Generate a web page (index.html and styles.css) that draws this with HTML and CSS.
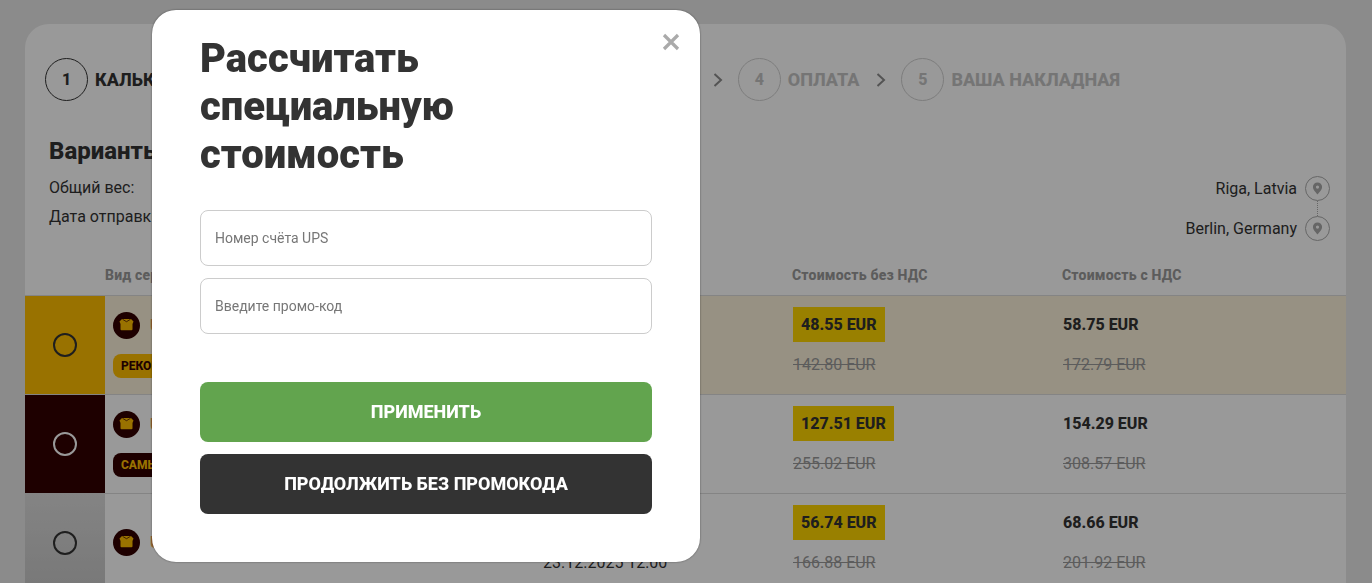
FILE: index.html
```html
<!DOCTYPE html>
<html lang="ru">
<head>
    <meta charset="UTF-8">
    <meta name="viewport" content="width=device-width, initial-scale=1.0">
    <title>Рассчитать специальную стоимость</title>
    <link rel="stylesheet" href="styles.css">
</head>
<body>
    <svg class="icon-defs" width="0" height="0" aria-hidden="true">
        <symbol id="box" viewBox="0 0 27 27">
            <circle cx="13.5" cy="13.5" r="13.5" fill="#320000"/>
            <path d="M6.5 9.5L9 7h9l2.5 2.5L19.5 12h-12z" fill="#ffbf00"/>
            <path d="M7.5 12h4l2-2.5 2 2.5h4v5.2a1 1 0 0 1-1 1h-10a1 1 0 0 1-1-1z" fill="#ffbf00"/>
            <path d="M9.5 7.3l4 2.4 4-2.4" fill="none" stroke="#320000" stroke-width=".7"/>
        </symbol>
        <symbol id="pin" viewBox="0 0 25 25">
            <circle cx="12.5" cy="12.5" r="12" fill="none" stroke="#aaa" stroke-width="1"/>
            <path d="M12.5 6.5a4.6 4.6 0 0 0-4.6 4.6c0 3 4.6 7.4 4.6 7.4s4.6-4.4 4.6-7.4a4.6 4.6 0 0 0-4.6-4.6zm0 6.2a1.6 1.6 0 1 1 0-3.2 1.6 1.6 0 0 1 0 3.2z" fill="#aaa"/>
        </symbol>
        <symbol id="chevron" viewBox="0 0 10 14">
            <path d="M1.5 1L8 7l-6.5 6" fill="none" stroke="currentColor" stroke-width="2"/>
        </symbol>
    </svg>

    <div class="card">
        <div class="steps">
            <div class="step active"><span class="step-num">1</span><span class="step-name">КАЛЬКУЛЯТОР</span></div>
            <div class="steps-rest">
                <svg class="chevron"><use href="#chevron"/></svg>
                <div class="step"><span class="step-num">4</span><span class="step-name">ОПЛАТА</span></div>
                <svg class="chevron"><use href="#chevron"/></svg>
                <div class="step"><span class="step-num">5</span><span class="step-name">ВАША НАКЛАДНАЯ</span></div>
            </div>
        </div>

        <div class="summary">
            <div class="summary-left">
                <h2>Варианты доставки</h2>
                <p>Общий вес:</p>
                <p>Дата отправки</p>
            </div>
            <div class="route">
                <div class="route-item">Riga, Latvia <svg class="pin"><use href="#pin"/></svg></div>
                <div class="route-item">Berlin, Germany <svg class="pin"><use href="#pin"/></svg></div>
            </div>
        </div>

        <div class="table-head">
            <div>Вид сервиса</div>
            <div></div>
            <div>Стоимость без НДС</div>
            <div>Стоимость с НДС</div>
        </div>

        <div class="row row-best">
            <div class="pick pick-best"><span class="radio"></span></div>
            <div class="service">
                <div class="service-name"><svg class="box"><use href="#box"/></svg><span>UPS</span></div>
                <span class="tag tag-best">РЕКОМЕНДУЕМ</span>
            </div>
            <div class="date"></div>
            <div class="price"><span class="price-new">48.55 EUR</span><span class="price-old">142.80 EUR</span></div>
            <div class="price"><span class="price-new plain">58.75 EUR</span><span class="price-old">172.79 EUR</span></div>
        </div>

        <div class="row">
            <div class="pick pick-fast"><span class="radio light"></span></div>
            <div class="service">
                <div class="service-name"><svg class="box"><use href="#box"/></svg><span>UPS</span></div>
                <span class="tag tag-fast">САМЫЙ БЫСТРЫЙ</span>
            </div>
            <div class="date"></div>
            <div class="price"><span class="price-new">127.51 EUR</span><span class="price-old">255.02 EUR</span></div>
            <div class="price"><span class="price-new plain">154.29 EUR</span><span class="price-old">308.57 EUR</span></div>
        </div>

        <div class="row">
            <div class="pick pick-plain"><span class="radio"></span></div>
            <div class="service">
                <div class="service-name"><svg class="box"><use href="#box"/></svg><span>UPS</span></div>
            </div>
            <div class="date">23.12.2025 12:00</div>
            <div class="price"><span class="price-new">56.74 EUR</span><span class="price-old">166.88 EUR</span></div>
            <div class="price"><span class="price-new plain">68.66 EUR</span><span class="price-old">201.92 EUR</span></div>
        </div>
    </div>

    <div class="overlay">
        <div class="modal">
            <button class="modal-close" type="button" aria-label="Закрыть">
                <svg width="18" height="18" viewBox="0 0 18 18"><path d="M2 2l14 14M16 2L2 16" stroke="#aaa" stroke-width="3.2" fill="none"/></svg>
            </button>
            <h1>Рассчитать специальную стоимость</h1>
            <form class="modal-form">
                <input type="text" placeholder="Номер счёта UPS">
                <input type="text" placeholder="Введите промо-код">
                <button class="btn btn-green" type="button">ПРИМЕНИТЬ</button>
                <button class="btn btn-dark" type="button">ПРОДОЛЖИТЬ БЕЗ ПРОМОКОДА</button>
            </form>
        </div>
    </div>
</body>
</html>
```

FILE: styles.css
```css
* {
    box-sizing: border-box;
}
html, body {
    height: 100%;
}
body {
    margin: 0;
    padding: 24px 26px 0 25px;
    overflow: hidden;
    font-family: Roboto, "Liberation Sans", sans-serif;
    background-color: #e8e8e8;
    color: #333;
}
.icon-defs {
    position: absolute;
}

.card {
    background: #fff;
    border-radius: 24px 24px 0 0;
    height: 559px;
    overflow: hidden;
}

/* steps */
.steps {
    display: flex;
    align-items: center;
    justify-content: space-between;
    padding: 34px 226px 0 20px;
    height: 77px;
}
.steps-rest {
    display: flex;
    align-items: center;
}
.step {
    display: flex;
    align-items: center;
    gap: 7px;
    color: #c4c4c4;
    font-size: 18px;
    font-weight: 800;
}
.step-num {
    display: flex;
    align-items: center;
    justify-content: center;
    width: 43px;
    height: 43px;
    border: 1px solid #d0d0d0;
    border-radius: 50%;
    font-size: 16px;
}
.step.active {
    color: #333;
}
.step.active .step-num {
    border-color: #333;
}
.chevron {
    width: 10px;
    height: 14px;
    margin: 0 15px 0 17px;
    color: #8c8c8c;
}

/* summary */
.summary {
    display: flex;
    justify-content: space-between;
    padding: 36px 16px 0 24px;
    height: 155px;
}
.summary-left h2 {
    margin: 0 0 13px;
    font-size: 24px;
    line-height: 28px;
    font-weight: 800;
}
.summary-left p {
    margin: 0 0 10px;
    font-size: 16px;
    line-height: 19px;
}
.route {
    padding-top: 39px;
}
.route-item {
    display: flex;
    align-items: center;
    justify-content: flex-end;
    gap: 8px;
    height: 25px;
    margin-bottom: 15px;
    font-size: 16px;
    position: relative;
}
.route-item:first-child::after {
    content: "";
    position: absolute;
    right: 12px;
    top: 25px;
    height: 15px;
    border-left: 1px dotted #aaa;
}
.pin {
    width: 25px;
    height: 25px;
}

/* table */
.table-head,
.row {
    display: grid;
    grid-template-columns: 80px 438px 249px 270px 1fr;
}
.table-head {
    grid-template-columns: 518px 249px 270px 1fr;
    padding-top: 11px;
    height: 40px;
    border-bottom: 1px solid #ddd;
    color: #999;
    font-size: 14px;
    font-weight: 800;
    letter-spacing: .2px;
}
.table-head > div:first-child {
    padding-left: 80px;
}
.row {
    height: 99px;
    border-bottom: 1px solid #ddd;
}
.row-best {
    background-color: #fcf2da;
}
.pick {
    display: flex;
    align-items: center;
    justify-content: center;
}
.pick-best {
    background-color: #ffbf00;
}
.pick-fast {
    background-color: #320000;
}
.pick-plain {
    background: linear-gradient(#dcdcdc, #c8c8c8);
}
.radio {
    width: 24px;
    height: 24px;
    border: 2px solid #333;
    border-radius: 50%;
}
.radio.light {
    border-color: #fff;
}
.service {
    padding: 16px 0 0 8px;
}
.service-name {
    display: flex;
    align-items: center;
    gap: 10px;
    height: 27px;
    color: #f0a050;
    font-size: 16px;
    font-weight: 700;
}
.box {
    width: 27px;
    height: 27px;
    flex: none;
}
.row:last-child .service {
    padding-top: 35px;
}
.tag {
    display: inline-block;
    margin-top: 15px;
    padding: 0 8px;
    height: 24px;
    line-height: 24px;
    border-radius: 8px;
    font-size: 12px;
    font-weight: 800;
}
.tag-best {
    background-color: #ffbf00;
    color: #320000;
}
.tag-fast {
    background-color: #320000;
    color: #ffbf00;
}
.date {
    padding-top: 59px;
    font-size: 16px;
}
.price {
    display: flex;
    flex-direction: column;
    align-items: flex-start;
    padding-top: 11px;
}
.price-new {
    padding: 0 8px;
    height: 35px;
    line-height: 35px;
    background-color: #ffd500;
    font-size: 16px;
    font-weight: 800;
    margin-left: 1px;
}
.price-new.plain {
    background: none;
    padding: 0;
}
.price-old {
    margin: 13px 0 0 1px;
    font-size: 16px;
    line-height: 19px;
    color: #999;
    text-decoration: line-through;
}

/* modal */
.overlay {
    position: fixed;
    inset: 0;
    padding: 10px 0 0 152px;
    background-color: rgba(0, 0, 0, 0.4);
}
.modal {
    position: relative;
    width: 548px;
    height: 552px;
    padding: 25px 48px 0;
    background: #fff;
    border-radius: 24px;
    box-shadow: 0 0 2px rgba(0, 0, 0, 0.5);
}
.modal h1 {
    margin: 0 0 31px;
    font-size: 40px;
    line-height: 48px;
    font-weight: 900;
    color: #333;
}
.modal-close {
    position: absolute;
    top: 23px;
    right: 20px;
    padding: 0;
    border: none;
    background: none;
    cursor: pointer;
}
.modal-form {
    display: flex;
    flex-direction: column;
}
.modal-form input {
    height: 56px;
    margin-bottom: 12px;
    padding: 0 14px;
    border: 1px solid #ccc;
    border-radius: 8px;
    font-family: inherit;
    font-size: 14px;
}
.modal-form input::placeholder {
    color: #777;
    opacity: 1;
}
.btn {
    height: 60px;
    padding-bottom: 2px;
    border: none;
    border-radius: 8px;
    color: #fff;
    font-family: inherit;
    font-size: 18px;
    font-weight: 800;
    cursor: pointer;
}
.btn-green {
    margin-top: 36px;
    background-color: #62a44e;
}
.btn-dark {
    margin-top: 12px;
    background-color: #333;
}
```
